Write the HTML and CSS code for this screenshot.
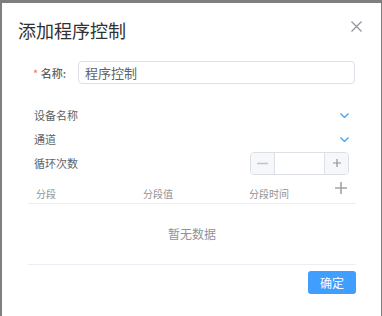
FILE: index.html
```html
<!DOCTYPE html>
<html lang="zh-CN">
<head>
    <meta charset="UTF-8">
    <meta name="viewport" content="width=device-width, initial-scale=1.0">
    <title>添加程序控制</title>
    <link rel="stylesheet" href="styles.css">
</head>
<body>
    <div class="dialog">
        <div class="dialog-header">
            <span class="dialog-title">添加程序控制</span>
            <svg class="close-icon" width="11" height="11" viewBox="0 0 11 11">
                <path d="M0.5 0.5 L10.5 10.5 M10.5 0.5 L0.5 10.5" stroke="#909399" stroke-width="1.2" fill="none"/>
            </svg>
        </div>

        <div class="dialog-body">
            <div class="name-row">
                <label class="name-label"><span class="required">*</span> 名称:</label>
                <input class="name-input" type="text" value="程序控制">
            </div>

            <div class="select-row">
                <span>设备名称</span>
                <svg class="chevron" width="9" height="5" viewBox="0 0 9 5">
                    <path d="M0.5 0.5 L4.5 4.5 L8.5 0.5" stroke="#409eff" stroke-width="1.3" fill="none"/>
                </svg>
            </div>
            <div class="select-row">
                <span>通道</span>
                <svg class="chevron" width="9" height="5" viewBox="0 0 9 5">
                    <path d="M0.5 0.5 L4.5 4.5 L8.5 0.5" stroke="#409eff" stroke-width="1.3" fill="none"/>
                </svg>
            </div>
            <div class="select-row">
                <span>循环次数</span>
                <div class="number-input">
                    <span class="num-btn num-minus">
                        <svg width="11" height="11" viewBox="0 0 11 11"><path d="M0 5.5 H11" stroke="#c0c4cc" stroke-width="1.4"/></svg>
                    </span>
                    <input class="num-field" type="text">
                    <span class="num-btn num-plus">
                        <svg width="8" height="8" viewBox="0 0 8 8"><path d="M0 4 H8 M4 0 V8" stroke="#909399" stroke-width="1.2"/></svg>
                    </span>
                </div>
            </div>

            <div class="seg-table">
                <div class="seg-head">
                    <span>分段</span>
                    <span>分段值</span>
                    <span>分段时间</span>
                    <svg class="add-icon" width="12" height="12" viewBox="0 0 12 12">
                        <path d="M0 6 H12 M6 0 V12" stroke="#a0a3aa" stroke-width="1.6"/>
                    </svg>
                </div>
                <div class="seg-empty">暂无数据</div>
            </div>
        </div>

        <div class="dialog-footer">
            <button class="button-primary">确定</button>
        </div>
    </div>
</body>
</html>
```

FILE: styles.css
```css
body {
    margin: 0;
    padding: 0;
    background-color: #7f7f7f;
    font-family: "Noto Sans CJK SC", "Noto Sans", sans-serif;
    overflow: hidden;
}
.dialog {
    background-color: #fff;
    margin: 3px 1px 0 2px;
    height: 320px;
}
.dialog-header {
    display: flex;
    justify-content: space-between;
    align-items: flex-start;
    padding: 15px 19px 0 16px;
    height: 43px;
}
.dialog-title {
    font-size: 18px;
    line-height: 24px;
    color: #303133;
}
.close-icon {
    margin-top: 3px;
}
.dialog-body {
    padding: 0 25px 0 26px;
}
.name-row {
    display: flex;
    align-items: center;
    height: 23px;
}
.name-label {
    width: 50px;
    padding-right: 12px;
    box-sizing: border-box;
    text-align: right;
    font-size: 11px;
    color: #606266;
    font-weight: 500;
}
.required {
    color: #f56c6c;
    font-weight: normal;
}
.name-input {
    flex: 1;
    height: 23px;
    box-sizing: border-box;
    border: 1px solid #dcdfe6;
    border-radius: 4px;
    padding: 0 6px;
    font-family: inherit;
    font-size: 13px;
    color: #606266;
    margin-right: 1px;
    outline: none;
}
.select-row {
    display: flex;
    justify-content: space-between;
    align-items: center;
    height: 24px;
    padding: 0 7px 0 6px;
    font-size: 11px;
    color: #606266;
}
.name-row + .select-row {
    margin-top: 19px;
}
.number-input {
    display: flex;
    width: 99px;
    height: 23px;
    box-sizing: border-box;
    border: 1px solid #dcdfe6;
    border-radius: 4px;
    overflow: hidden;
}
.num-btn {
    width: 23px;
    background-color: #f5f7fa;
    display: flex;
    align-items: center;
    justify-content: center;
}
.num-minus {
    border-right: 1px solid #dcdfe6;
}
.num-plus {
    border-left: 1px solid #dcdfe6;
}
.num-field {
    flex: 1;
    min-width: 0;
    border: none;
    outline: none;
    padding: 0;
}
.seg-head {
    display: grid;
    grid-template-columns: 107px 106px 1fr auto;
    align-items: end;
    height: 28px;
    padding: 0 9px 0 8px;
    border-bottom: 1px solid #ebeef5;
    font-size: 10px;
    color: #909399;
}
.seg-head span {
    padding-bottom: 2px;
    line-height: 14px;
}
.add-icon {
    align-self: start;
    margin-top: 7px;
}
.seg-empty {
    height: 60px;
    line-height: 60px;
    text-align: center;
    font-size: 12px;
    color: #909399;
    border-bottom: 1px solid #ebeef5;
}
.dialog-footer {
    display: flex;
    justify-content: flex-end;
    padding: 6px 25px 0 0;
}
.button-primary {
    width: 48px;
    height: 23px;
    border: none;
    border-radius: 3px;
    background-color: #409eff;
    color: #fff;
    font-family: inherit;
    font-size: 12px;
    padding: 0;
}
```
